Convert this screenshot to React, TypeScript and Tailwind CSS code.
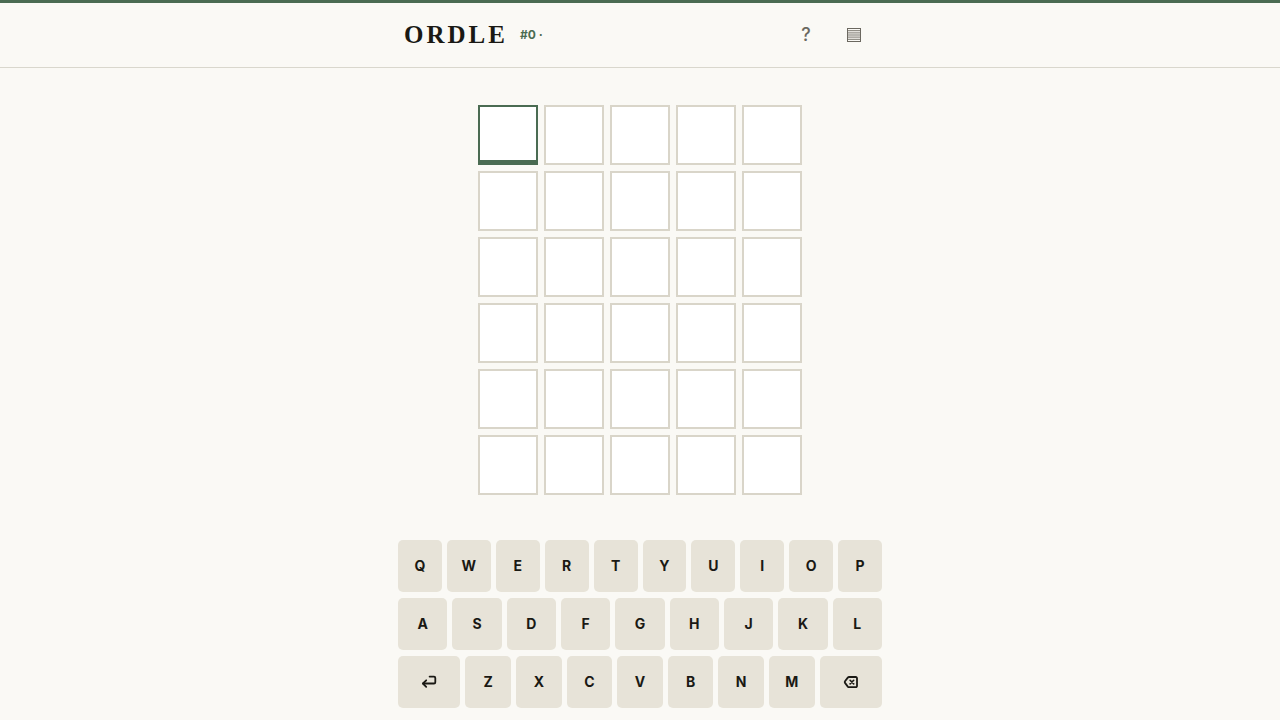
const ROWS = 6;
const COLS = 5;

const KEY_ROWS = [
  ['Q', 'W', 'E', 'R', 'T', 'Y', 'U', 'I', 'O', 'P'],
  ['A', 'S', 'D', 'F', 'G', 'H', 'J', 'K', 'L'],
  ['Enter', 'Z', 'X', 'C', 'V', 'B', 'N', 'M', 'Backspace'],
];

function EnterIcon() {
  return (
    <svg viewBox="0 0 16 16" className="mx-auto size-4" fill="none" stroke="currentColor" strokeWidth="1.8" strokeLinejoin="round" strokeLinecap="round" aria-hidden="true">
      <path d="M8.6 2.6h4.4a1.3 1.3 0 0 1 1.3 1.3v4.3a1.3 1.3 0 0 1-1.3 1.3H2.2" />
      <path d="M5.2 6.3 1.9 9.5l3.3 3.3" />
    </svg>
  );
}

function BackspaceIcon() {
  return (
    <svg viewBox="0 0 16 16" className="mx-auto size-4" fill="none" stroke="currentColor" strokeLinejoin="round" strokeLinecap="round" aria-hidden="true">
      <path strokeWidth="1.8" d="M6.1 3h6.7a1.2 1.2 0 0 1 1.2 1.2v7.8a1.2 1.2 0 0 1-1.2 1.2H6.1a1.7 1.7 0 0 1-1.3-.6L2 8.9a1.3 1.3 0 0 1 0-1.6l2.8-3.7A1.7 1.7 0 0 1 6.1 3Z" />
      <path strokeWidth="1.6" d="m7.1 6.3 3.6 3.6M10.7 6.3 7.1 9.9" />
    </svg>
  );
}

function StatsIcon() {
  return (
    <svg viewBox="0 0 14 14" className="mx-auto size-3.5" fill="none" stroke="currentColor" aria-hidden="true">
      <rect x="0.5" y="0.5" width="13" height="13" />
      <path d="M1 2.7h12M1 4.9h12M1 7h12M1 9.1h12M1 11.3h12" strokeWidth="0.9" />
    </svg>
  );
}

const KEY_ICONS: Record<string, () => React.JSX.Element> = {
  Enter: EnterIcon,
  Backspace: BackspaceIcon,
};

interface TileProps {
  active: boolean;
}

function Tile({ active }: TileProps) {
  return (
    <div
      className={`size-[60px] border-2 bg-white ${
        active ? 'border-[#4a6b52] border-b-[5px]' : 'border-[#d9d5c9]'
      }`}
    />
  );
}

function Key({ label }: { label: string }) {
  const Icon = KEY_ICONS[label];

  return (
    <button
      type="button"
      aria-label={label}
      className={`h-[52px] min-w-0 basis-0 rounded-[5px] bg-[#e7e3d8] text-sm font-bold ${
        Icon ? 'grow-[1.37]' : 'grow'
      }`}
    >
      {Icon ? <Icon /> : label}
    </button>
  );
}

function Header() {
  return (
    <header className="border-t-[3px] border-t-[#4a6b52] border-b border-b-[#d9d7cd]">
      <div className="mx-auto flex h-16 w-full max-w-[504px] items-center justify-between px-4">
        <div className="flex items-center gap-3">
          <h1 className="font-['Liberation_Serif',serif] text-[25px] leading-8 font-bold tracking-[3px]">ORDLE</h1>
          <span className="text-xs font-bold text-[#4a6b52]">#0 ·</span>
        </div>
        <div className="flex gap-1 text-[#6b6860]">
          <button type="button" aria-label="Help" className="size-11 text-lg font-medium">
            ?
          </button>
          <button type="button" aria-label="Statistics" className="size-11">
            <StatsIcon />
          </button>
        </div>
      </div>
    </header>
  );
}

function Keyboard() {
  return (
    <div className="mx-auto flex w-full max-w-[500px] flex-col gap-1.5 px-2 pt-2 pb-3">
      {KEY_ROWS.map((row) => (
        <div key={row[0]} className="flex gap-[5px]">
          {row.map((label) => (
            <Key key={label} label={label} />
          ))}
        </div>
      ))}
    </div>
  );
}

export default function App() {
  return (
    <div className="flex min-h-screen flex-col bg-[#faf9f5] font-['Inter',sans-serif] text-[#1a1914]">
      <Header />
      <main className="flex flex-1 items-center justify-center">
        <div className="grid grid-cols-5 gap-1.5">
          {Array.from({ length: ROWS * COLS }, (_, i) => (
            <Tile key={i} active={i === 0} />
          ))}
        </div>
      </main>
      <Keyboard />
    </div>
  );
}
